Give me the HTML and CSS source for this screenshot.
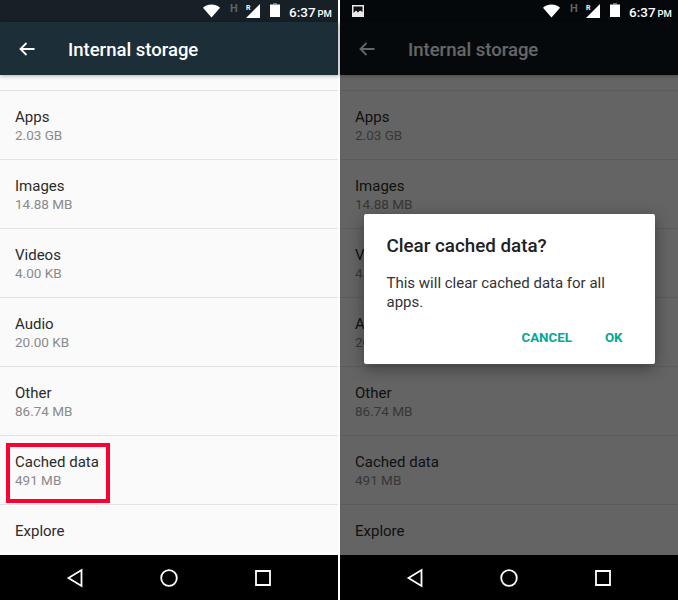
FILE: index.html
```html
<!DOCTYPE html>
<html lang="en">
<head>
    <meta charset="UTF-8">
    <title>Internal storage</title>
    <link rel="stylesheet" href="styles.css">
</head>
<body>
    <div class="phone">
        <div class="status">
            <svg class="ic-wifi" viewBox="0 0 18 14"><path d="M0 3.5C5-1 13-1 18 3.5L9 14z" fill="#fff"/></svg>
            <span class="net">H</span>
            <span class="roam">R</span>
            <svg class="ic-signal" viewBox="0 0 14 14"><path d="M14 0V14H0z" fill="#fff"/></svg>
            <svg class="ic-batt" viewBox="0 0 10 14"><path d="M3 0H7V1.500H3z" fill="#777"/><path d="M0 1.500H10V14H0z" fill="#fff"/></svg>
            <span class="time">6:37 <small>PM</small></span>
        </div>
        <div class="appbar">
            <svg class="ic-back" viewBox="0 0 16 14"><path d="M15.500 7H1.500M7.500 1L1.500 7l6 6" fill="none" stroke="currentColor" stroke-width="1.800"/></svg>
            <span class="title">Internal storage</span>
        </div>
        <div class="list">
            <div class="row"><p>Apps</p><span>2.03 GB</span></div>
            <div class="row"><p>Images</p><span>14.88 MB</span></div>
            <div class="row"><p>Videos</p><span>4.00 KB</span></div>
            <div class="row"><p>Audio</p><span>20.00 KB</span></div>
            <div class="row"><p>Other</p><span>86.74 MB</span></div>
            <div class="row"><p>Cached data</p><span>491 MB</span><div class="mark"></div></div>
            <div class="row"><p>Explore</p></div>
        </div>
        <div class="nav">
            <div class="nav-btn"><svg viewBox="0 0 18 20"><path d="M15.500 2V18L2.500 10z" fill="none" stroke="#fff" stroke-width="1.800"/></svg></div>
            <div class="nav-btn"><svg viewBox="0 0 18 20"><circle cx="9" cy="10" r="7.800" fill="none" stroke="#fff" stroke-width="1.800"/></svg></div>
            <div class="nav-btn"><svg viewBox="0 0 18 20"><path d="M2 3H16V17H2z" fill="none" stroke="#fff" stroke-width="1.800"/></svg></div>
        </div>
    </div>

    <div class="phone phone-dim">
        <div class="status">
            <svg class="ic-pic" viewBox="0 0 12 12"><path d="M0 0H12V12H0z" fill="#e8e8e8"/><path d="M1.500 1.500H10.500V7L8 5.500 6 7.500 4 5.500 1.500 8z" fill="#111"/></svg>
            <svg class="ic-wifi" viewBox="0 0 18 14"><path d="M0 3.500C5-1 13-1 18 3.500L9 14z" fill="#fff"/></svg>
            <span class="net">H</span>
            <span class="roam">R</span>
            <svg class="ic-signal" viewBox="0 0 14 14"><path d="M14 0V14H0z" fill="#fff"/></svg>
            <svg class="ic-batt" viewBox="0 0 10 14"><path d="M3 0H7V1.500H3z" fill="#777"/><path d="M0 1.500H10V14H0z" fill="#fff"/></svg>
            <span class="time">6:37 <small>PM</small></span>
        </div>
        <div class="screen">
            <div class="appbar">
                <svg class="ic-back" viewBox="0 0 16 14"><path d="M15.500 7H1.500M7.500 1L1.500 7l6 6" fill="none" stroke="currentColor" stroke-width="1.800"/></svg>
                <span class="title">Internal storage</span>
            </div>
            <div class="list">
                <div class="row"><p>Apps</p><span>2.03 GB</span></div>
                <div class="row"><p>Images</p><span>14.88 MB</span></div>
                <div class="row"><p>Videos</p><span>4.00 KB</span></div>
                <div class="row"><p>Audio</p><span>20.00 KB</span></div>
                <div class="row"><p>Other</p><span>86.74 MB</span></div>
                <div class="row"><p>Cached data</p><span>491 MB</span></div>
                <div class="row"><p>Explore</p></div>
            </div>
            <div class="scrim">
                <div class="dialog">
                    <h2>Clear cached data?</h2>
                    <p>This will clear cached data for all apps.</p>
                    <div class="actions">
                        <span>CANCEL</span>
                        <span>OK</span>
                    </div>
                </div>
            </div>
        </div>
        <div class="nav">
            <div class="nav-btn"><svg viewBox="0 0 18 20"><path d="M15.500 2V18L2.500 10z" fill="none" stroke="#fff" stroke-width="1.800"/></svg></div>
            <div class="nav-btn"><svg viewBox="0 0 18 20"><circle cx="9" cy="10" r="7.800" fill="none" stroke="#fff" stroke-width="1.800"/></svg></div>
            <div class="nav-btn"><svg viewBox="0 0 18 20"><path d="M2 3H16V17H2z" fill="none" stroke="#fff" stroke-width="1.800"/></svg></div>
        </div>
    </div>
</body>
</html>
```

FILE: styles.css
```css
html, body {
    margin: 0;
    height: 600px;
    overflow: hidden;
    background-color: #fff;
}
body {
    display: flex;
    gap: 2px;
    font-family: Roboto, sans-serif;
}
.phone {
    flex: 0 0 338px;
    min-width: 0;
    height: 600px;
    display: flex;
    flex-direction: column;
}
.status {
    height: 22px;
    flex: none;
    display: flex;
    align-items: center;
    padding-left: 203px;
    background-color: #172027;
    color: #fff;
}
.phone-dim .status {
    background-color: #05080b;
    padding-left: 12px;
}
.ic-pic {
    width: 12px;
    height: 12px;
    margin-right: 179px;
}
.ic-wifi {
    width: 17px;
    height: 14px;
}
.net {
    margin-left: 10px;
    width: 16px;
    margin-top: -6px;
    font-size: 11px;
    font-weight: 700;
    color: #5c6469;
}
.roam {
    width: 0;
    margin-top: -7px;
    font-size: 7px;
    font-weight: 700;
    position: relative;
    z-index: 1;
}
.ic-signal {
    width: 14px;
    height: 14px;
}
.ic-batt {
    width: 10px;
    height: 14px;
    margin-left: 10px;
    margin-top: -2px;
}
.time {
    margin-left: 9px;
    margin-top: 2px;
    font-size: 13.500px;
    font-weight: 500;
    white-space: nowrap;
    word-spacing: -1.500px;
}
.time small {
    font-size: 9.500px;
}
.appbar {
    height: 53px;
    flex: none;
    display: flex;
    align-items: center;
    position: relative;
    z-index: 1;
    background-color: #1c2e37;
    color: #fff;
    box-shadow: 0 1px 4px rgba(0, 0, 0, .3);
}
.phone-dim .appbar {
    background-color: #0f1820;
}
.ic-back {
    width: 16px;
    height: 14px;
    margin-left: 19px;
}
.title {
    margin-left: 33px;
    margin-top: 2px;
    font-size: 18.500px;
    font-weight: 500;
}
.list {
    flex: 1;
    min-height: 0;
    overflow: hidden;
    padding-top: 15px;
    background-color: #fafafa;
}
.row {
    position: relative;
    height: 68px;
    padding-left: 15px;
    border-top: 1px solid #e3e3e3;
}
.row p {
    margin: 0;
    padding-top: 17px;
    font-size: 15px;
    line-height: 19px;
    color: #2b2b2b;
}
.row span {
    display: block;
    font-size: 13.500px;
    line-height: 17px;
    color: #8a8a8a;
}
.mark {
    position: absolute;
    left: 6px;
    top: 7px;
    width: 96px;
    height: 52px;
    border: 4px solid #fa0032;
}
.nav {
    height: 45px;
    flex: none;
    display: flex;
    justify-content: center;
    background-color: #000;
}
.nav-btn {
    width: 94px;
    display: flex;
    align-items: center;
    justify-content: center;
}
.nav-btn svg {
    width: 18px;
    height: 20px;
}
.screen {
    flex: 1;
    min-height: 0;
    position: relative;
    display: flex;
    flex-direction: column;
}
.scrim {
    position: absolute;
    top: 0;
    right: 0;
    bottom: 0;
    left: 0;
    z-index: 2;
    display: flex;
    align-items: center;
    justify-content: center;
    background-color: rgba(0, 0, 0, .6);
}
.dialog {
    width: 291px;
    height: 150px;
    box-sizing: border-box;
    padding: 20px 23px 0;
    background-color: #fff;
    border-radius: 2px;
    box-shadow: 0 4px 16px rgba(0, 0, 0, .4);
}
.dialog h2 {
    margin: 0;
    font-size: 18.800px;
    font-weight: 500;
    line-height: 24px;
    color: #212121;
}
.dialog p {
    margin: 16px 0 0;
    font-size: 15px;
    line-height: 19px;
    color: #333;
}
.actions {
    display: flex;
    justify-content: flex-end;
    gap: 33px;
    margin: 18px 9px 0 0;
    font-size: 13.300px;
    font-weight: 700;
    color: #00a896;
}
```
